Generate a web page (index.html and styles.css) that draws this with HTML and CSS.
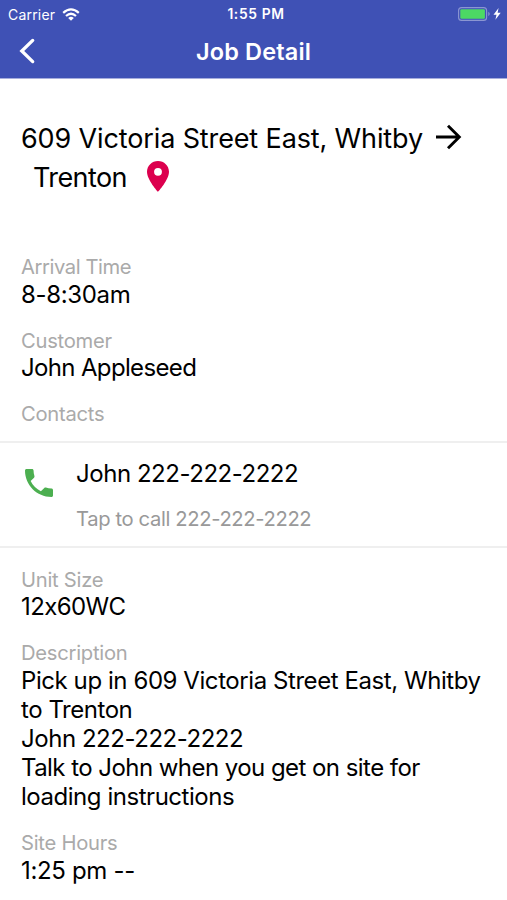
FILE: index.html
```html
<!DOCTYPE html>
<html lang="en">
<head>
<meta charset="utf-8">
<title>Job Detail</title>
<link rel="stylesheet" href="styles.css">
</head>
<body>
<header class="header">
  <div class="status">
    <div class="carrier"><span>Carrier</span>
      <svg class="wifi" width="18" height="13" viewBox="0 0 18 13" fill="none" stroke="#fff" stroke-width="2.2"><path d="M1.2 4.9Q9-2 16.8 4.9M4 8Q9 3.5 14 8"/><path d="M6.2 9.9Q9 7.5 11.8 9.9L9 12.8Z" fill="#fff" stroke="none"/></svg>
    </div>
    <div class="time">1:55 PM</div>
    <svg class="battery" width="44" height="14" viewBox="0 0 44 14"><rect x=".6" y=".6" width="28" height="12.8" rx="3" fill="none" stroke="#fff" stroke-opacity=".4" stroke-width="1.1"/><rect x="2.3" y="2.3" width="24.6" height="9.4" rx="1.2" fill="#4cd964"/><path d="M30.3 4.8Q33.2 7 30.3 9.2Z" fill="#fff" fill-opacity=".4"/><path d="M40.6 1L35.5 7.7H38.5L37.4 12.8L42.7 5.8H39.6Z" fill="#fff"/></svg>
  </div>
  <nav class="nav">
    <svg class="back" width="18" height="28" viewBox="0 0 18 28" fill="none" stroke="#fff" stroke-width="3.3" stroke-linecap="round" stroke-linejoin="miter"><path d="M14.7 3.4L3.8 14L14.7 24.6"/></svg>
    <h1 class="nav-title">Job Detail</h1>
  </nav>
</header>
<main>
  <section class="route">
    <div class="route-row"><span class="from">609 Victoria Street East, Whitby</span>
      <svg class="arrow" width="26" height="26" viewBox="0 0 26 26" fill="none" stroke="#000" stroke-width="2.9"><path d="M0 13H23.2M12 1.7L23.3 13L12 24.3"/></svg>
    </div>
    <div class="route-row second"><span class="to">Trenton</span>
      <svg class="pin" width="22" height="31" viewBox="5 2 14 20" preserveAspectRatio="none" fill="#dc004e"><path d="M12 2C8.13 2 5 5.13 5 9c0 5.25 7 13 7 13s7-7.75 7-13c0-3.87-3.13-7-7-7zm0 9.5a2.5 2.5 0 0 1 0-5 2.5 2.5 0 0 1 0 5z"/></svg>
    </div>
  </section>
  <section class="fields">
    <div class="field"><div class="label l-arrival">Arrival Time</div><div class="value v-arrival">8-8:30am</div></div>
    <div class="field"><div class="label">Customer</div><div class="value v-customer">John Appleseed</div></div>
    <div class="label">Contacts</div>
  </section>
  <section class="contact">
    <svg class="phone" width="28" height="28" viewBox="3 3 18 18" fill="#4caf50"><path d="M6.62 10.79c1.44 2.83 3.76 5.14 6.59 6.59l2.2-2.2c.27-.27.67-.36 1.02-.24 1.12.37 2.33.57 3.57.57.55 0 1 .45 1 1V20c0 .55-.45 1-1 1-9.39 0-17-7.61-17-17 0-.55.45-1 1-1h3.5c.55 0 1 .45 1 1 0 1.25.2 2.45.57 3.57.11.35.03.74-.25 1.02l-2.2 2.2z"/></svg>
    <div class="contact-text"><div class="value">John 222-222-2222</div><div class="label tap">Tap to call 222-222-2222</div></div>
  </section>
  <section class="fields lower">
    <div class="field"><div class="label">Unit Size</div><div class="value v-unit">12x60WC</div></div>
    <div class="field"><div class="label">Description</div>
      <div class="value v-desc1">Pick up in 609 Victoria Street East, Whitby</div>
      <div class="value">to Trenton</div>
      <div class="value">John 222-222-2222</div>
      <div class="value v-desc4">Talk to John when you get on site for</div>
      <div class="value">loading instructions</div></div>
    <div class="field"><div class="label">Site Hours</div><div class="value v-hours">1:25 pm --</div></div>
  </section>
</main>
</body>
</html>
```
FILE: styles.css
```css
* { box-sizing: border-box; }
body { margin: 0; width: 507px; height: 900px; overflow: hidden; background: #fff; color: #000; font-family: Inter, "Liberation Sans", sans-serif; white-space: nowrap; }
svg { display: block; flex: none; }
.header { height: 79px; background: #3f51b5; color: #fff; border-bottom: 1px solid #a7aedd; }
.status { height: 27px; display: grid; grid-template-columns: 1fr auto 1fr; align-items: center; padding: 0 5px 0 8px; font-size: 14px; line-height: 27px; }
.carrier { display: flex; align-items: center; gap: 7px; letter-spacing: .2px; }
.time { font-weight: 600; font-size: 13.8px; letter-spacing: .65px; padding: 1px 0 0 2px; }
.battery { justify-self: end; }
.nav { height: 50px; display: grid; grid-template-columns: 1fr auto 1fr; align-items: center; padding: 0 0 0 18px; }
.nav-title { margin: 0 18px 0 0; font-size: 23.5px; font-weight: 600; line-height: 50px; letter-spacing: .15px; }
.back { margin-top: -3px; }
.route { padding: 40px 21px 0; height: 176px; font-size: 27px; }
.route-row { height: 39px; line-height: 39px; display: flex; align-items: center; }
.from { letter-spacing: -.13px; }
.to { letter-spacing: -.6px; }
.arrow { margin: -3px 0 0 13px; }
.second { padding-left: 12px; }
.pin { margin: -3px 0 0 20.5px; }
.fields { padding: 0 21px; height: 186px; }
.field { margin-bottom: 20px; }
.label { height: 24.6px; line-height: 24.6px; font-size: 20.2px; color: #aaa; letter-spacing: -.25px; }
.value { height: 29.1px; line-height: 29.1px; font-size: 24px; letter-spacing: -.46px; }
.l-arrival { letter-spacing: -.42px; }
.v-arrival { letter-spacing: -.35px; }
.v-customer { letter-spacing: -.65px; }
.v-unit { letter-spacing: -.6px; font-feature-settings: "calt" 0; }
.v-desc1 { letter-spacing: -.43px; }
.v-desc4 { letter-spacing: -.55px; }
.v-hours { letter-spacing: -.33px; }
.contact { height: 107px; border: solid #efefef; border-width: 2px 0; padding: 0 25px; display: flex; }
.phone { margin-top: 26px; }
.contact-text { padding: 16px 0 0 23px; }
.tap { margin-top: 19px; color: #999; letter-spacing: -.36px; }
.lower { padding-top: 19.5px; height: auto; }
```
